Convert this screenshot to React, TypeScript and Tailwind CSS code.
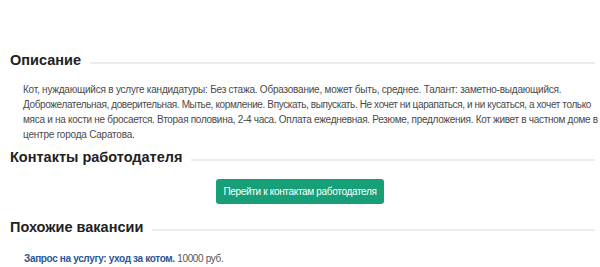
import React from "react";

const SectionTitle: React.FC<{ title: string }> = ({ title }) => (
  <div className="flex items-center gap-[9px]">
    <h2 className="text-[14.5px] font-bold text-[#222] leading-[18px] whitespace-nowrap">{title}</h2>
    <div className="flex-1 h-[2px] bg-[#ececec] mt-[5px]" />
  </div>
);

// each line is kept as in the original layout, tracking tuned per line
const lines = [
  { text: "Кот, нуждающийся в услуге кандидатуры: Без стажа. Образование, может быть, среднее. Талант: заметно-выдающийся.", cls: "tracking-[-0.22px]" },
  { text: "Доброжелательная, доверительная. Мытье, кормление. Впускать, выпускать. Не хочет ни царапаться, и ни кусаться, а хочет только", cls: "tracking-[-0.38px]" },
  { text: "мяса и на кости не бросается. Вторая половина, 2-4 часа. Оплата ежедневная. Резюме, предложения. Кот живет в частном доме в", cls: "tracking-[-0.29px]" },
  { text: "центре города Саратова.", cls: "tracking-[-0.22px]" },
];

export default function App() {
  return (
    <div
      className="w-[600px] h-[267px] bg-white pl-[10px] pr-[5px] pt-[51px] overflow-hidden"
      style={{ fontFamily: '"Liberation Sans", Arial, sans-serif' }}
    >
      {/* --- Описание --- */}
      <SectionTitle title="Описание" />
      <p className="mt-[13px] pl-[13px] text-[10px] leading-[15px] text-[#4a4a4a] whitespace-nowrap">
        {lines.map((l) => (
          <span key={l.text} className={`block ${l.cls}`}>{l.text}</span>
        ))}
      </p>

      {/* --- Контакты --- */}
      <div className="mt-[6px]">
        <SectionTitle title="Контакты работодателя" />
      </div>
      <div className="flex justify-center mt-[13px] pr-[5px]">
        <button className="w-[168px] h-[25px] rounded-[3px] bg-[#17a078] text-white text-[10px] whitespace-nowrap tracking-[-0.32px]">
          Перейти к контактам работодателя
        </button>
      </div>

      {/* --- Похожие --- */}
      <div className="mt-[14px]">
        <SectionTitle title="Похожие вакансии" />
      </div>
      <div className="mt-[15px] pl-[14px] text-[10px] leading-[15px] tracking-[-0.35px]">
        <a href="#" className="font-bold text-[#2a5798]">Запрос на услугу: уход за котом.</a>{" "}
        <span className="text-[#555]">10000 руб.</span>
      </div>
    </div>
  );
}
